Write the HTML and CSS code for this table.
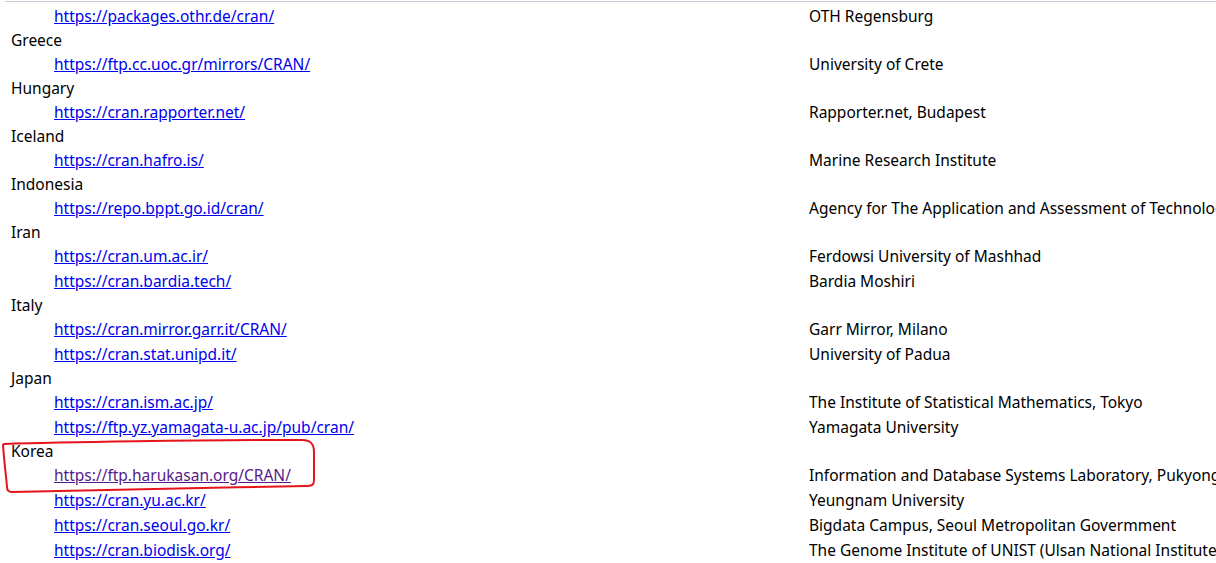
FILE: index.html
```
<!DOCTYPE html>
<html>
<head>
<meta charset="utf-8">
<link rel="stylesheet" href="styles.css">
</head>
<body>
<div class="page">
  <div class="topline"></div>
  <div class="mirrors">
    <div class="group">
      <div class="row"><a class="link" href="#">https://packages.othr.de/cran/</a><span class="desc">OTH Regensburg</span></div>
    </div>
    <div class="group">
      <div class="country">Greece</div>
      <div class="row"><a class="link" href="#">https://ftp.cc.uoc.gr/mirrors/CRAN/</a><span class="desc">University of Crete</span></div>
    </div>
    <div class="group">
      <div class="country">Hungary</div>
      <div class="row"><a class="link" href="#">https://cran.rapporter.net/</a><span class="desc">Rapporter.net, Budapest</span></div>
    </div>
    <div class="group">
      <div class="country">Iceland</div>
      <div class="row"><a class="link" href="#">https://cran.hafro.is/</a><span class="desc">Marine Research Institute</span></div>
    </div>
    <div class="group">
      <div class="country">Indonesia</div>
      <div class="row"><a class="link" href="#">https://repo.bppt.go.id/cran/</a><span class="desc">Agency for The Application and Assessment of Technology</span></div>
    </div>
    <div class="group">
      <div class="country">Iran</div>
      <div class="row"><a class="link" href="#">https://cran.um.ac.ir/</a><span class="desc">Ferdowsi University of Mashhad</span></div>
      <div class="row"><a class="link" href="#">https://cran.bardia.tech/</a><span class="desc">Bardia Moshiri</span></div>
    </div>
    <div class="group">
      <div class="country">Italy</div>
      <div class="row"><a class="link" href="#">https://cran.mirror.garr.it/CRAN/</a><span class="desc">Garr Mirror, Milano</span></div>
      <div class="row"><a class="link" href="#">https://cran.stat.unipd.it/</a><span class="desc">University of Padua</span></div>
    </div>
    <div class="group">
      <div class="country">Japan</div>
      <div class="row"><a class="link" href="#">https://cran.ism.ac.jp/</a><span class="desc">The Institute of Statistical Mathematics, Tokyo</span></div>
      <div class="row"><a class="link" href="#">https://ftp.yz.yamagata-u.ac.jp/pub/cran/</a><span class="desc">Yamagata University</span></div>
    </div>
    <div class="group">
      <div class="country">Korea</div>
      <div class="row"><a class="link visited" href="#">https://ftp.harukasan.org/CRAN/</a><span class="desc">Information and Database Systems Laboratory, Pukyong National University</span></div>
      <div class="row"><a class="link" href="#">https://cran.yu.ac.kr/</a><span class="desc">Yeungnam University</span></div>
      <div class="row"><a class="link" href="#">https://cran.seoul.go.kr/</a><span class="desc">Bigdata Campus, Seoul Metropolitan Govermment</span></div>
      <div class="row"><a class="link" href="#">https://cran.biodisk.org/</a><span class="desc">The Genome Institute of UNIST (Ulsan National Institute of Science and Technology)</span></div>
    </div>
  </div>
  <svg class="mark" width="330" height="70" viewBox="0 0 330 70" xmlns="http://www.w3.org/2000/svg">
    <path d="M4 14 C 60 12, 200 10, 302 10 C 311 10, 314 14, 314 22 L 314 50 C 314 55, 312 56, 306 56 C 200 58, 80 60, 12 62 C 8 62, 7 60, 7 57 C 6 45, 4 30, 3 15 Z" fill="none" stroke="#e5141b" stroke-width="2" stroke-linejoin="round"/>
  </svg>
</div>
</body>
</html>
```
FILE: styles.css
```
html, body {
  margin: 0;
  padding: 0;
  background: #ffffff;
}
body {
  font-family: "Noto Sans", "Open Sans", sans-serif;
  font-size: 15.5px;
  color: #000000;
  overflow: hidden;
  white-space: nowrap;
}
.page {
  position: relative;
  width: 1216px;
  height: 563px;
  overflow: hidden;
}
.topline {
  height: 1px;
  margin: 1px 0 0 5px;
  background: #c8ccd8;
}
.mirrors {
  padding: 2px 0 0 11px;
}
.country {
  height: 23px;
  line-height: 23px;
}
.row {
  display: grid;
  grid-template-columns: 798px 1fr;
  height: 25px;
  line-height: 25px;
}
.link {
  padding-left: 43px;
  color: #0000ee;
  text-decoration: underline;
}
.link.visited {
  color: #551a8b;
}
.desc {
  overflow: hidden;
}
.mark {
  position: absolute;
  left: 0;
  top: 430px;
}
```
